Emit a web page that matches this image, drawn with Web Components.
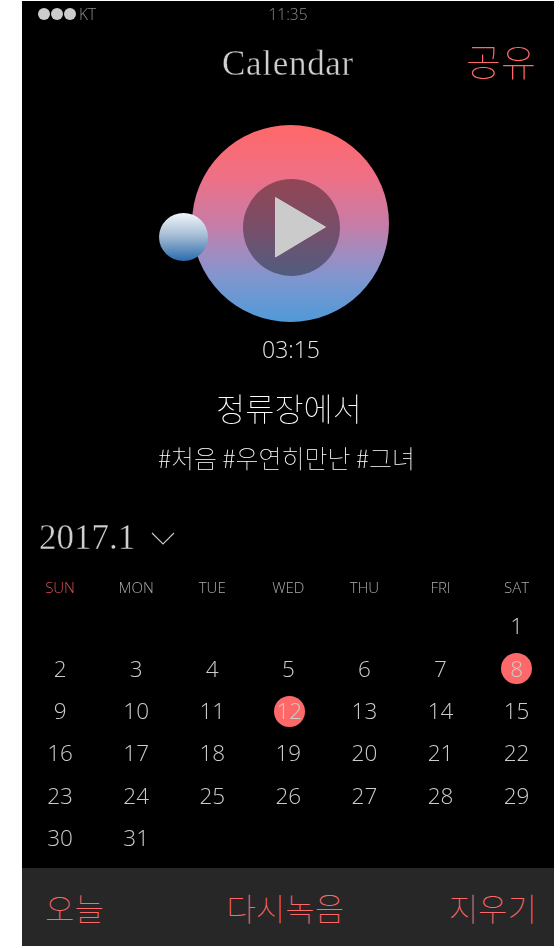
<!DOCTYPE html>
<html>
<head>
<meta charset="utf-8">
<title>Calendar</title>
<style>
html, body { margin: 0; background: #fff; }
body { padding: 1px 6px 2px 22px; font-family: "Noto Sans CJK KR", sans-serif; }
</style>
</head>
<body>
<cal-screen>
  <status-bar></status-bar>
  <title-bar></title-bar>
  <play-disc></play-disc>
  <track-info></track-info>
  <month-calendar></month-calendar>
  <action-bar></action-bar>
</cal-screen>
<script>
const sans = `"Noto Sans CJK KR", sans-serif`;

class CalScreen extends HTMLElement {
    constructor() {
        super();
        const shadow = this.attachShadow({ mode: 'open' });
        shadow.innerHTML = `
        <style>
            :host { display: flex; flex-direction: column; width: 532px; height: 945px; background: #000; color: #ccc; overflow: hidden; }
        </style>
        <slot></slot>`;
    }
}

class StatusBar extends HTMLElement {
    constructor() {
        super();
        const shadow = this.attachShadow({ mode: 'open' });
        shadow.innerHTML = `
        <style>
            :host { display: grid; grid-template-columns: 1fr auto 1fr; align-items: center; height: 26px; padding: 0 16px; font: 300 15.5px/26px "Open Sans", sans-serif; color: #8c8c8c; will-change: transform; }
            .left { display: flex; align-items: center; gap: 1px; }
            i { width: 12px; height: 12px; border-radius: 50%; background: #ccc; }
            span { margin-left: 2px; }
        </style>
        <div class="left"><i></i><i></i><i></i><span>KT</span></div>
        <div>11:35</div>
        <div></div>`;
    }
}

class TitleBar extends HTMLElement {
    constructor() {
        super();
        const shadow = this.attachShadow({ mode: 'open' });
        shadow.innerHTML = `
        <style>
            :host { display: grid; grid-template-columns: 1fr auto 1fr; align-items: center; height: 72px; padding: 0 18px; will-change: transform; }
            /* thin black outline makes the serif look like a light weight */
            h1 { margin: 2px 0 0; font: 400 35px/70px "Liberation Serif", serif; color: #cfcfcf; letter-spacing: .7px; -webkit-text-stroke: .4px #000; }
            a { justify-self: end; margin-top: -7px; font: 100 38px/72px ${sans}; color: #ff6868; }
        </style>
        <div></div>
        <h1>Calendar</h1>
        <a>공유</a>`;
    }
}

class PlayDisc extends HTMLElement {
    constructor() {
        super();
        const shadow = this.attachShadow({ mode: 'open' });
        shadow.innerHTML = `
        <style>
            :host { display: flex; justify-content: center; padding: 0 0 0 5px; margin-top: 26px; position: relative; }
            .disc { width: 197px; height: 197px; border-radius: 50%; background: linear-gradient(#ff6868 0%, #f06f84 25%, #c87ca6 50%, #a08cc0 65%, #7f96cf 78%, #4f9ad8 100%); display: flex; align-items: center; justify-content: center; }
            .btn { width: 97px; height: 97px; margin: 8px 0 0 2px; border-radius: 50%; background: rgba(0,0,0,.38); }
            svg { display: block; width: 97px; height: 97px; }
            .knob { position: absolute; left: 137px; top: 88px; width: 49px; height: 48px; border-radius: 50%; background: linear-gradient(#f2f6fa, #a9bfd6 45%, #2a6cad); }
        </style>
        <div class="disc">
            <div class="btn">
                <svg viewBox="0 0 97 97"><polygon points="32.5,18.5 82.5,48 32.5,78" fill="#cbcbcb" stroke="#dcdcdc" stroke-width=".8"/></svg>
            </div>
        </div>
        <div class="knob"></div>`;
    }
}

class TrackInfo extends HTMLElement {
    constructor() {
        super();
        const shadow = this.attachShadow({ mode: 'open' });
        shadow.innerHTML = `
        <style>
            :host { display: flex; flex-direction: column; align-items: center; color: #fff; will-change: transform; }
            .time { margin-top: 11px; padding-left: 6px; font: 300 23px/32px "Open Sans", sans-serif; color: #e8e8e8; }
            .name { margin-top: 18px; padding-left: 2px; font: 100 31.7px/48px ${sans}; }
            .tags { margin-top: 8px; padding-right: 3px; font: 100 25px/36px ${sans}; }
        </style>
        <div class="time">03:15</div>
        <div class="name">정류장에서</div>
        <div class="tags">#처음 #우연히만난 #그녀</div>`;
    }
}

class MonthCalendar extends HTMLElement {
    constructor() {
        super();
        const shadow = this.attachShadow({ mode: 'open' });
        const days = ['SUN', 'MON', 'TUE', 'WED', 'THU', 'FRI', 'SAT'];
        const marked = [8, 12];
        const cells = [];
        for (let i = 0; i < 6; i++) cells.push('<div></div>');
        for (let d = 1; d <= 31; d++) {
            cells.push(`<div class="${marked.includes(d) ? 'on' : ''}"><span>${d}</span></div>`);
        }
        shadow.innerHTML = `
        <style>
            :host { display: block; margin-top: 38px; will-change: transform; }
            .month { display: flex; align-items: center; padding-left: 17px; height: 50px; font: 400 35px/50px "Liberation Serif", serif; color: #cfcfcf; -webkit-text-stroke: .4px #000; }
            .month svg { margin-left: 16px; margin-top: 1px; }
            .grid { display: grid; grid-template-columns: repeat(7, 76.1px); justify-items: center; }
            .head { font: 300 15px/26px "Open Sans", sans-serif; color: #aaa; margin-top: 10.5px; }
            .head .sun { color: #d8545a; }
            .dates { margin-top: 5.8px; font: 300 22.5px/42.4px "Open Sans", sans-serif; color: #ccc; }
            .dates div { height: 42.4px; display: flex; align-items: center; justify-content: center; }
            .on span { width: 31px; height: 31px; border-radius: 50%; background: #ff6868; display: flex; align-items: center; justify-content: center; color: #ccc; }
            .on:nth-child(18) span { margin-left: 2px; }
        </style>
        <div class="month">2017.1
            <svg width="24" height="13" viewBox="0 0 24 13"><path d="M1 1 L12 12 L23 1" fill="none" stroke="#ccc" stroke-width="1.1"/></svg>
        </div>
        <div class="grid head">${days.map((d, i) => `<div class="${i === 0 ? 'sun' : ''}">${d}</div>`).join('')}</div>
        <div class="grid dates">${cells.join('')}</div>`;
    }
}

class ActionBar extends HTMLElement {
    constructor() {
        super();
        const shadow = this.attachShadow({ mode: 'open' });
        shadow.innerHTML = `
        <style>
            :host { display: flex; justify-content: space-between; align-items: center; margin-top: auto; height: 78px; padding: 0 17px 0 23px; background: #272727; font: 100 32px/78px ${sans}; color: #ff6868; box-sizing: border-box; }
            .mid { margin-left: 18px; }
        </style>
        <span>오늘</span><span class="mid">다시녹음</span><span>지우기</span>`;
    }
}

customElements.define('cal-screen', CalScreen);
customElements.define('status-bar', StatusBar);
customElements.define('title-bar', TitleBar);
customElements.define('play-disc', PlayDisc);
customElements.define('track-info', TrackInfo);
customElements.define('month-calendar', MonthCalendar);
customElements.define('action-bar', ActionBar);
</script>
</body>
</html>
